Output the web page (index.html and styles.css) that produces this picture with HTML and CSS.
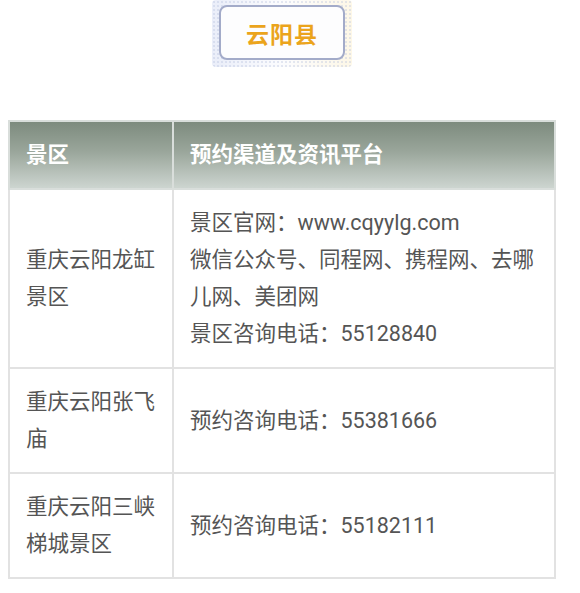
FILE: index.html
```html
<!DOCTYPE html>
<html lang="zh">
<head>
<meta charset="utf-8">
<link rel="stylesheet" href="styles.css">
</head>
<body>
<div class="page">
  <div class="title-wrap">
    <div class="title-frame">
      <div class="title-box">云阳县</div>
    </div>
  </div>
  <table class="info">
    <thead>
      <tr><th class="c1">景区</th><th class="c2">预约渠道及资讯平台</th></tr>
    </thead>
    <tbody>
      <tr>
        <td class="c1">重庆云阳龙缸景区</td>
        <td class="c2">景区官网：www.cqyylg.com<br>微信公众号、同程网、携程网、去哪儿网、美团网<br>景区咨询电话：55128840</td>
      </tr>
      <tr>
        <td class="c1">重庆云阳张飞庙</td>
        <td class="c2">预约咨询电话：55381666</td>
      </tr>
      <tr>
        <td class="c1">重庆云阳三峡梯城景区</td>
        <td class="c2">预约咨询电话：55182111</td>
      </tr>
    </tbody>
  </table>
</div>
</body>
</html>
```
FILE: styles.css
```css
html, body {
  margin: 0;
  padding: 0;
  background: #ffffff;
}
body {
  font-family: Roboto, "Noto Sans CJK SC", sans-serif;
}
.page {
  width: 548px;
  margin-left: 8px;
}
.title-wrap {
  display: flex;
  justify-content: center;
  height: 120px;
  align-items: flex-start;
}
.title-frame {
  padding: 5px 7px 7px 7px;
  background:
    radial-gradient(circle, rgba(180,190,220,0.35) 0.8px, transparent 1.2px) 0 0 / 4px 4px,
    linear-gradient(90deg, rgba(220,226,245,0.6), rgba(245,246,252,0.3) 50%, rgba(252,242,215,0.6));
  border-radius: 4px;
}
.title-box {
  width: 122px;
  height: 51px;
  border: 2px solid #a3abc9;
  border-radius: 8px;
  background: #fdfdfe;
  color: #eba41c;
  font-family: "Noto Sans CJK SC", sans-serif;
  font-weight: 700;
  font-size: 23px;
  display: flex;
  align-items: center;
  justify-content: center;
  letter-spacing: 1px;
}
.info {
  width: 548px;
  border-collapse: collapse;
  border: 2px solid #dedede;
  font-size: 21.5px;
  line-height: 37px;
  color: #555555;
}
.info th, .info td {
  padding: 14px 16px 15px 16px;
  text-align: left;
  vertical-align: middle;
  border: 2px solid #e2e2e2;
}
.info .c1 {
  width: 130px;
}
.info .c2 {
  padding-left: 16px;
  padding-right: 10px;
}
.info th {
  background: linear-gradient(180deg, #7d8b7e 0%, #9aa69b 45%, #cdd5d0 100%);
  color: #ffffff;
  font-weight: 700;
  border-color: #d9dedb;
  height: 37px;
}
.info td {
  background: #ffffff;
}
```
